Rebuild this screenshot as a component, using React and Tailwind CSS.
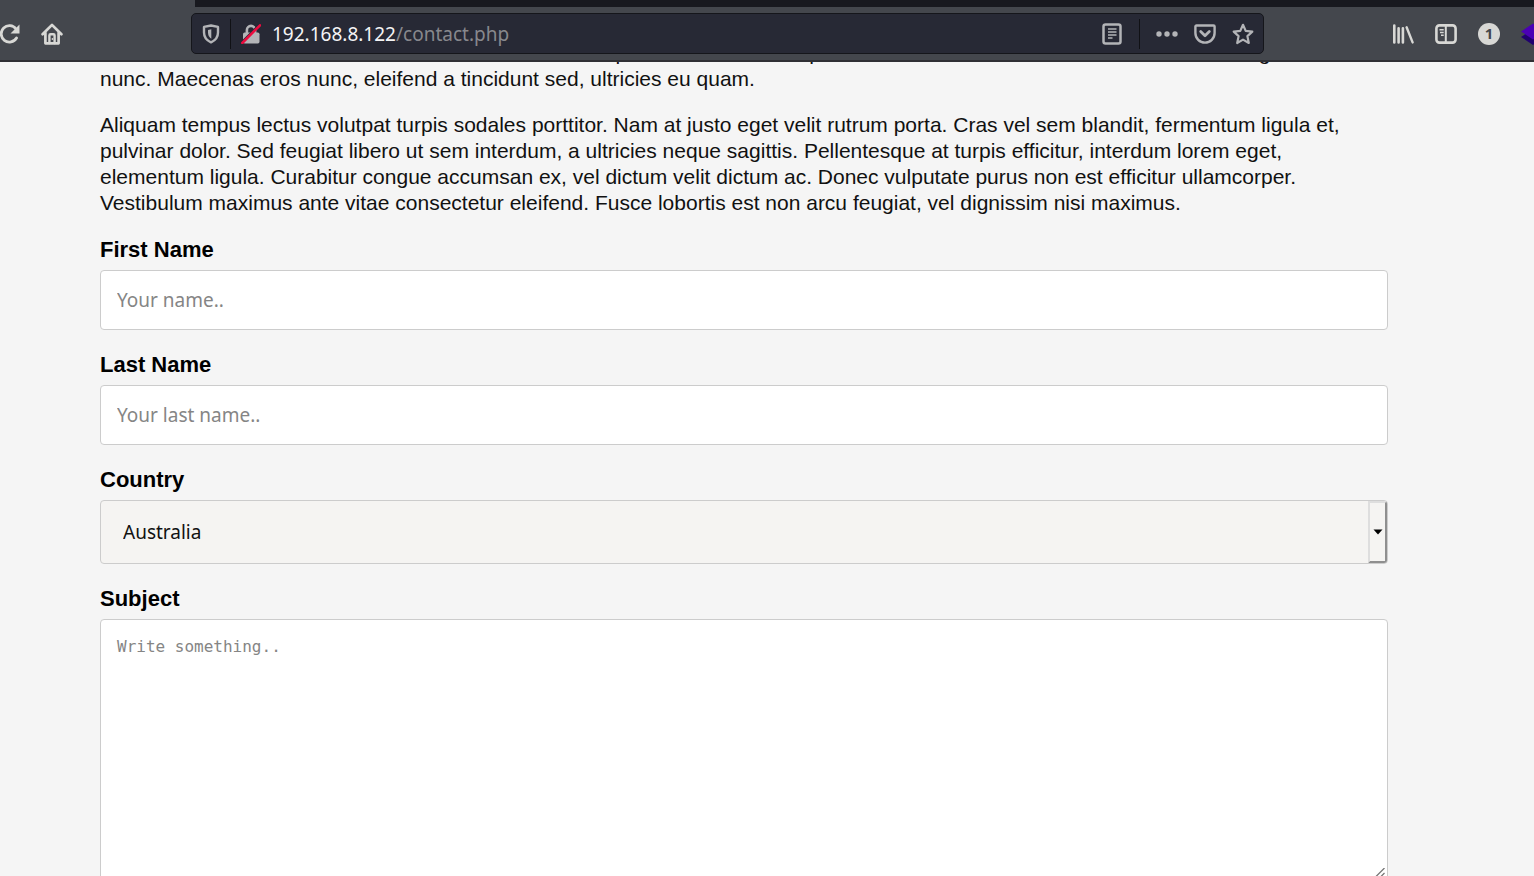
import React from "react";

function ReloadIcon() {
  return (
    <svg width="22" height="22" viewBox="0 0 22 22" fill="none" stroke="#d8d8d5" strokeWidth="2.8">
      <path d="M17.500 15A8.2 8.2 0 1 1 17 6" strokeLinecap="round" />
      <path d="M20.500 1.500v9h-9z" fill="#d8d8d5" stroke="none" />
    </svg>
  );
}

function HomeIcon() {
  return (
    <svg width="22" height="22" viewBox="0 0 22 22" fill="none" stroke="#d8d8d5" strokeWidth="2.7" strokeLinejoin="round" strokeLinecap="round">
      <path d="M1.6 11.3 11 1.9l9.4 9.4" />
      <path d="M4.4 10v10.3h13.2V10" />
      <path d="M8.4 20v-7.5q0-1.2 1.2-1.2h2.8q1.2 0 1.2 1.2V20" strokeWidth="2.4" />
      <path d="M11.4 15.8v.4" strokeWidth="1.6" />
    </svg>
  );
}

function ShieldIcon() {
  return (
    <svg width="18" height="20" viewBox="0 0 18 20" fill="none">
      <path d="M9 1.500 16 2.900v5.500c0 4.800-2.900 8-7 9.900-4.100-1.900-7-5.100-7-9.900V2.900z" stroke="#b3b4b7" strokeWidth="2.400" strokeLinejoin="round" />
      <path d="M9.300 5.200v9.600c-2.100-1.400-3.300-3.500-3.300-6.300V5.900z" fill="#b3b4b7" />
    </svg>
  );
}

function InsecureLockIcon() {
  return (
    <svg width="20" height="20" viewBox="0 0 20 20" fill="none">
      <path d="M5.900 9V6a4.100 4.100 0 0 1 8.200 0v3" stroke="#b3b4b7" strokeWidth="2.600" />
      <rect x="2" y="8.500" width="16.500" height="11" rx="1.700" fill="#b3b4b7" />
      <path d="M.5 18.200 18.200.5" stroke="#272935" strokeWidth="1.600" />
      <path d="M1.300 19 19 1.300" stroke="#ec0c3f" strokeWidth="2.500" strokeLinecap="round" />
    </svg>
  );
}

function ReaderIcon() {
  return (
    <svg width="20" height="22" viewBox="0 0 20 22" fill="none" stroke="#b3b4b7">
      <rect x="1.500" y="1.500" width="17" height="19" rx="2" strokeWidth="2.500" />
      <path d="M6 6h8.500M6 9h8.500M6 12h8.500M6 15h4.500" strokeWidth="1.500" />
    </svg>
  );
}

function DotsIcon() {
  return (
    <svg width="22" height="6" viewBox="0 0 22 6" fill="#b3b4b7">
      <circle cx="3" cy="3" r="2.700" />
      <circle cx="11" cy="3" r="2.700" />
      <circle cx="19" cy="3" r="2.700" />
    </svg>
  );
}

function PocketIcon() {
  return (
    <svg width="22" height="20" viewBox="0 0 22 20" fill="none" stroke="#b3b4b7" strokeLinecap="round" strokeLinejoin="round">
      <path d="M2.500 1.500h17q1.100 0 1.100 1.100V9a9.600 9.600 0 0 1-19.200 0V2.600q0-1.100 1.100-1.100z" strokeWidth="2.400" />
      <path d="m6.700 7.600 4.300 4.200 4.300-4.200" strokeWidth="2.800" />
    </svg>
  );
}

function StarIcon() {
  return (
    <svg width="22" height="22" viewBox="0 0 22 22" fill="none" stroke="#b3b4b7" strokeWidth="2.200" strokeLinejoin="round">
      <path d="m11 1.800 2.700 6.100 6.600.7-4.900 4.500 1.400 6.900L11 16.600 5.200 20l1.400-6.900-4.900-4.500 6.600-.7z" />
    </svg>
  );
}

function LibraryIcon() {
  return (
    <svg width="22" height="22" viewBox="0 0 22 22" fill="none" stroke="#d8d8d5" strokeWidth="2.600" strokeLinecap="round">
      <path d="M2.300 2.600v16.900M6.600 5.300v14.200M10.900 5.300v14.200" />
      <path d="m14.600 4.300 6 15.100" strokeWidth="2.400" />
    </svg>
  );
}

function SidebarIcon() {
  return (
    <svg width="22" height="20" viewBox="0 0 22 20" fill="none" stroke="#d8d8d5">
      <rect x="1.400" y="1.400" width="19.200" height="17.200" rx="3" strokeWidth="2.600" />
      <path d="M10.800 2v16" strokeWidth="2" />
      <path d="M4.500 5.700h4.200M5 8.500h3.700M6 11.300h2.700" strokeWidth="1.400" />
    </svg>
  );
}

function LayersIcon() {
  return (
    <svg width="24" height="22" viewBox="0 0 24 22">
      <path d="m0 14 12-8 12 8-12 8z" fill="#210070" />
      <path d="m0 8.500 12-8 12 8-12 8z" fill="#4b00b5" />
    </svg>
  );
}

const fieldClass =
  "block h-[60px] w-full rounded-[4px] border border-[#cccccc] bg-white px-4 font-['Noto_Sans'] text-[19px] text-black outline-none placeholder:text-[#858585] placeholder:opacity-100";
const labelClass = "block text-[22px] leading-[25px] font-bold text-black";

function Header() {
  return (
    <header className="shrink-0 border-b-2 border-[#2f3035] bg-[#44474d]">
      <div className="ml-[195px] h-[7px] bg-[#18191f]" />
      <div className="flex h-[53px] items-center">
        <div className="flex w-[191px] shrink-0 items-center gap-5">
          <button type="button" aria-label="Reload" className="-ml-px"><ReloadIcon /></button>
          <button type="button" aria-label="Home"><HomeIcon /></button>
        </div>
        <div className="flex h-[41px] min-w-0 flex-1 items-center rounded-[5px] border border-[#15161b] bg-[#272935] pr-[9px] pl-[10px]">
          <button type="button" aria-label="Tracking protection"><ShieldIcon /></button>
          <span className="mx-[10px] h-[30px] w-px bg-[#101115]" />
          <button type="button" aria-label="Connection is not secure"><InsecureLockIcon /></button>
          <div className="ml-[11px] min-w-0 flex-1 font-['Noto_Sans'] text-[19px] leading-7 whitespace-nowrap text-[#87888d]">
            <span className="text-[#f4f4f5]">192.168.8.122</span>/contact.php
          </div>
          <button type="button" aria-label="Reader view"><ReaderIcon /></button>
          <span className="mr-4 ml-[17px] h-[30px] w-px bg-[#101115]" />
          <div className="flex items-center gap-4">
            <button type="button" aria-label="Page actions"><DotsIcon /></button>
            <button type="button" aria-label="Save to Pocket"><PocketIcon /></button>
            <button type="button" aria-label="Bookmark"><StarIcon /></button>
          </div>
        </div>
        <div className="flex w-[270px] shrink-0 items-center gap-[21px] overflow-hidden pl-[128px]">
          <button type="button" aria-label="Library" className="shrink-0"><LibraryIcon /></button>
          <button type="button" aria-label="Sidebars" className="shrink-0"><SidebarIcon /></button>
          <button type="button" aria-label="Account" className="flex size-[22px] shrink-0 items-center justify-center rounded-full bg-[#d8d8d5] font-['Open_Sans'] text-[15px] font-bold text-[#44474d]">1</button>
          <button type="button" aria-label="Extension" className="shrink-0"><LayersIcon /></button>
        </div>
      </div>
    </header>
  );
}

export default function App() {
  return (
    <div className="flex h-screen flex-col overflow-hidden bg-[#f5f5f5] font-['Liberation_Sans',Arial,sans-serif]">
      <Header />
      <main className="min-h-0 flex-1 overflow-hidden pr-[146px] pl-[100px]">
        <div className="-mt-[22px] space-y-5 text-[21px] leading-[26px] text-[#111111]">
          <p>
            Vivamus interdum nisi non lectus tincidunt sit amet semper enim sed rutrum porta. Sed ut enim at massa tincidunt dictum feugiat
            <br />
            nunc. Maecenas eros nunc, eleifend a tincidunt sed, ultricies eu quam.
          </p>
          <p>
            Aliquam tempus lectus volutpat turpis sodales porttitor. Nam at justo eget velit rutrum porta. Cras vel sem blandit, fermentum ligula et,
            <br />
            pulvinar dolor. Sed feugiat libero ut sem interdum, a ultricies neque sagittis. Pellentesque at turpis efficitur, interdum lorem eget,
            <br />
            elementum ligula. Curabitur congue accumsan ex, vel dictum velit dictum ac. Donec vulputate purus non est efficitur ullamcorper.
            <br />
            Vestibulum maximus ante vitae consectetur eleifend. Fusce lobortis est non arcu feugiat, vel dignissim nisi maximus.
          </p>
        </div>
        <form className="mt-[21px] flex flex-col gap-[22px]" onSubmit={(e) => e.preventDefault()}>
          <div className="flex flex-col gap-2">
            <label htmlFor="fname" className={labelClass}>First Name</label>
            <input id="fname" type="text" placeholder="Your name.." className={fieldClass} />
          </div>
          <div className="flex flex-col gap-2">
            <label htmlFor="lname" className={labelClass}>Last Name</label>
            <input id="lname" type="text" placeholder="Your last name.." className={fieldClass} />
          </div>
          <div className="flex flex-col gap-2">
            <label htmlFor="country" className={labelClass}>Country</label>
            <div className="relative">
              <select id="country" defaultValue="australia" className="block h-[64px] w-full appearance-none rounded-[4px] border border-[#cccccc] bg-[#f5f4f2] px-[22px] font-['Noto_Sans'] text-[19px] text-[#111111] outline-none">
                <option value="australia">Australia</option>
                <option value="canada">Canada</option>
                <option value="usa">USA</option>
              </select>
              <span className="pointer-events-none absolute inset-y-px right-px flex w-[19px] items-center justify-center rounded-r-[3px] border-2 border-t-[#dedede] border-r-[#8f8f8f] border-b-[#8f8f8f] border-l-[#dedede] bg-[#f5f4f2]">
                <svg width="10" height="6" viewBox="0 0 10 6"><path d="M.5.500h9L5 5.500z" fill="#000" /></svg>
              </span>
            </div>
          </div>
          <div className="flex flex-col gap-2">
            <label htmlFor="subject" className={labelClass}>Subject</label>
            <div className="relative">
              <textarea id="subject" placeholder="Write something.." className="block h-[262px] w-full resize-none rounded-[4px] border border-[#cccccc] bg-white px-4 py-[17px] font-['DejaVu_Sans_Mono'] text-[16px] leading-5 outline-none placeholder:text-[#858585] placeholder:opacity-100" />
              <svg className="pointer-events-none absolute right-[3px] bottom-[3px]" width="10" height="10" viewBox="0 0 10 10" stroke="#777" strokeWidth="1.300"><path d="M0 9.500 9.500 0M5 9.500 9.500 5" /></svg>
            </div>
          </div>
        </form>
      </main>
    </div>
  );
}
